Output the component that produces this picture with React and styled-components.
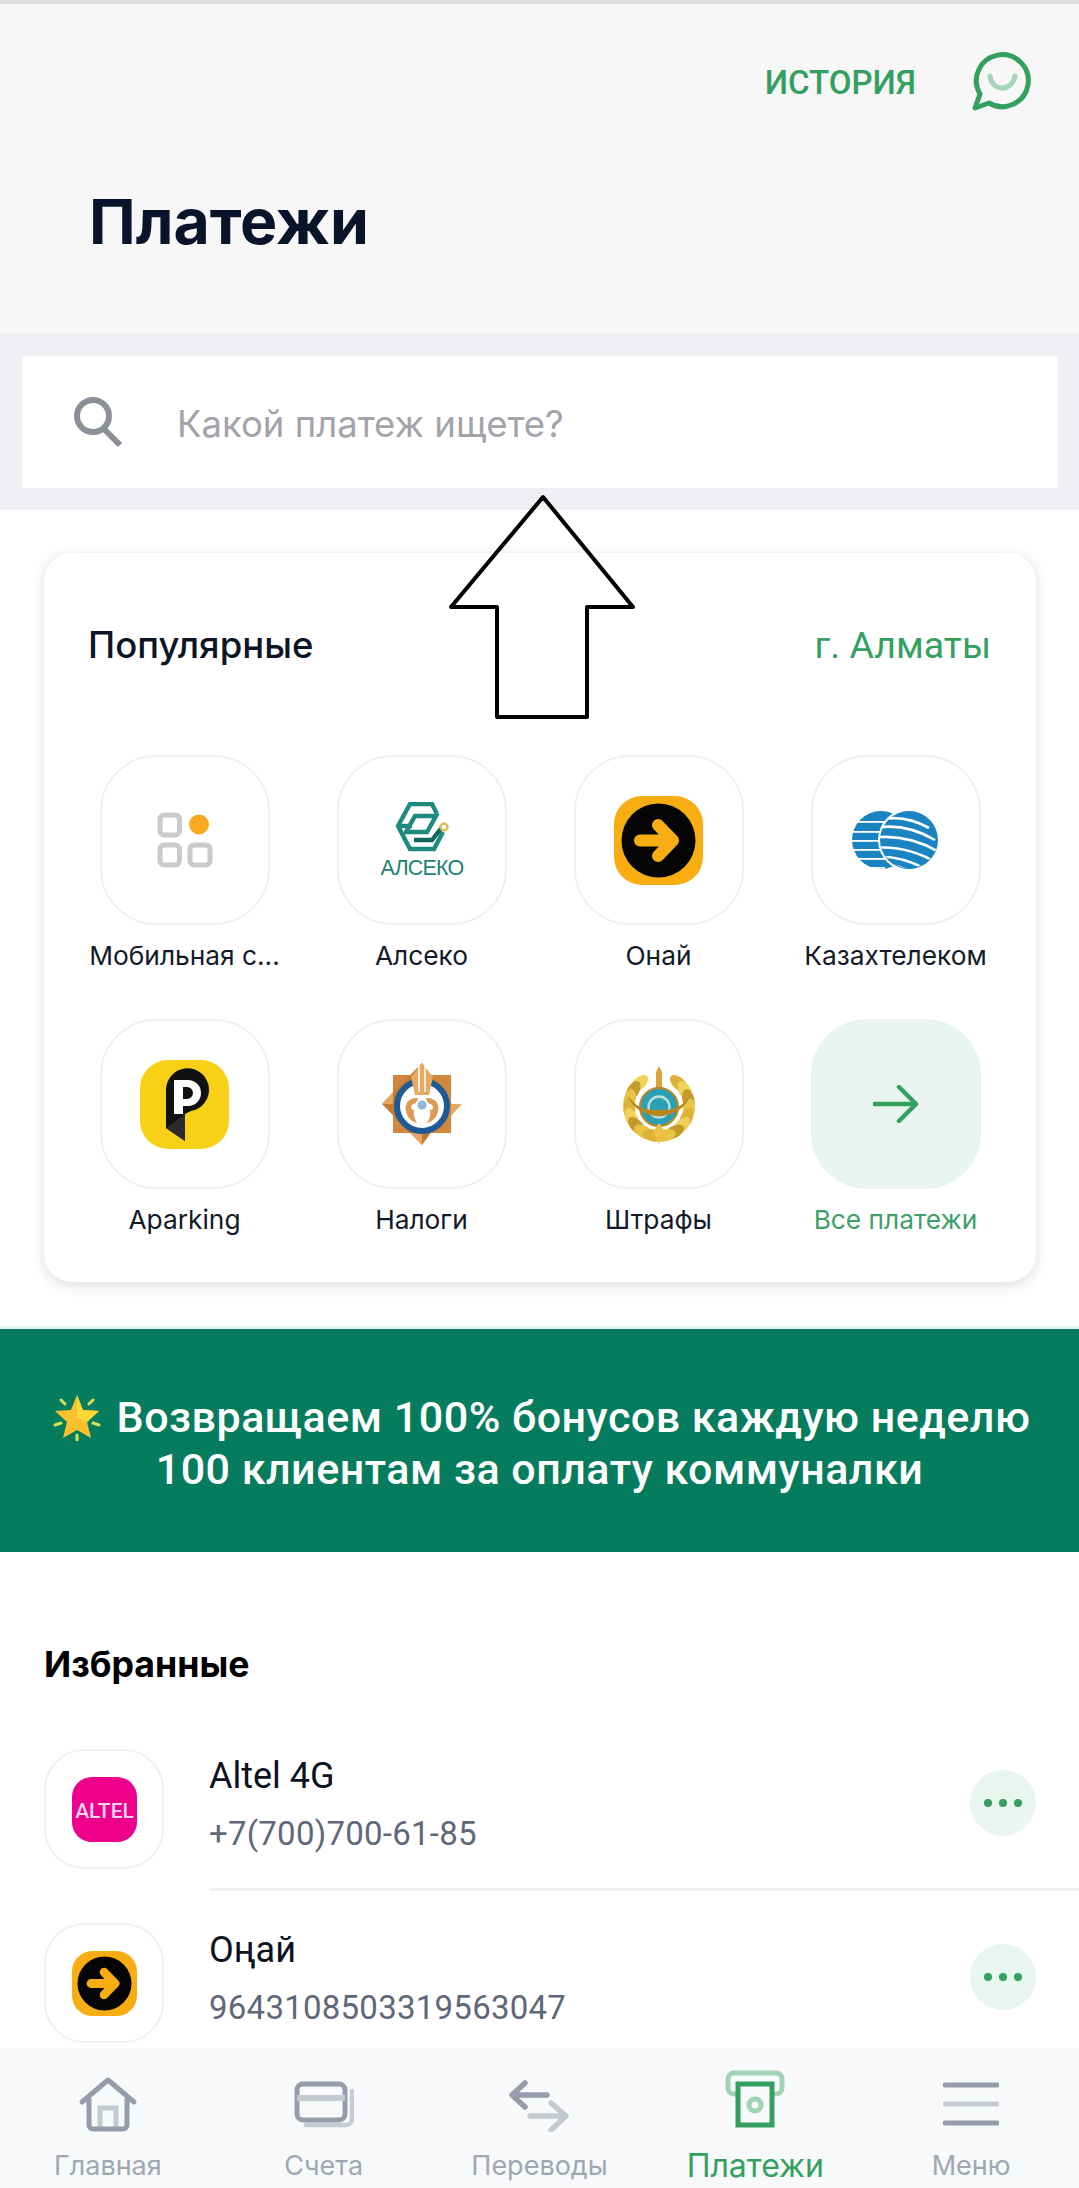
import React from "react";
import styled, { createGlobalStyle } from "styled-components";

const GREEN = "#34a060";
const FONT = `Inter, "Noto Sans", sans-serif`;

const Global = createGlobalStyle`
  html, body { margin: 0; padding: 0; background: #fff; }
  body { font-family: ${FONT}; }
  * { box-sizing: border-box; }
`;

const Page = styled.div`
  position: relative;
  width: 1079px;
  height: 2188px;
  display: flex;
  flex-direction: column;
  overflow: hidden;
  background: #fff;
  border-top: 4px solid #e0e0e0;
`;

const Content = styled.main`
  flex: 1;
  min-height: 0;
  overflow: hidden;
`;

const Header = styled.header`
  height: 329px;
  background: #f7f7f8;
  padding: 44px 45px 0 89px;
`;

const TopActions = styled.div`
  display: flex;
  justify-content: flex-end;
  align-items: center;
  gap: 54px;
  height: 64px;
  margin-bottom: 71px;
`;

const HistoryLink = styled.a`
  padding-top: 4px;
  font-family: "Roboto", sans-serif;
  font-size: 33px;
  font-weight: 500;
  color: ${GREEN};
`;

const Title = styled.h1`
  margin: 0;
  font-size: 62.5px;
  line-height: 76px;
  font-weight: 700;
  color: #07142a;
`;

const SearchBand = styled.div`
  background: #efeff4;
  padding: 23px 21px 22px 22px;
`;

const SearchBox = styled.div`
  height: 132px;
  background: #fff;
  display: flex;
  align-items: center;
  padding-left: 52px;
  gap: 53px;
`;

const Placeholder = styled.span`
  padding-top: 4px;
  font-size: 36.5px;
  color: #a2a4a9;
`;

const Card = styled.section`
  margin: 43px 43px 0 44px;
  height: 729px;
  background: #fff;
  border-radius: 28px;
  box-shadow: 0 3px 14px rgba(20, 30, 50, 0.16);
  padding: 64px 45px 0 44px;
`;

const CardHead = styled.div`
  display: flex;
  justify-content: space-between;
  align-items: center;
  height: 56px;
`;

const CardTitle = styled.h2`
  margin: 0;
  font-size: 36.5px;
  line-height: 56px;
  font-weight: 500;
  color: #0c1526;
`;

const CityLink = styled.a`
  font-family: "Roboto", sans-serif;
  font-size: 37.5px;
  color: ${GREEN};
`;

const Grid = styled.div`
  display: grid;
  grid-template-columns: repeat(4, 237px);
  grid-auto-rows: 264px;
  margin: 82px 0 0 -22px;
`;

const Service = styled.div`
  display: flex;
  flex-direction: column;
  align-items: center;
`;

const Tile = styled.div`
  width: ${(p) => p.$size}px;
  height: ${(p) => p.$size}px;
  flex: none;
  display: flex;
  align-items: center;
  justify-content: center;
  border-radius: ${(p) => Math.round(p.$size * 0.33)}px;
  border: ${(p) => (p.$accent ? "none" : "2.5px solid #f0f0f2")};
  background: ${(p) => (p.$accent ? "#e8f5ee" : "#fff")};
`;

const ServiceName = styled.div`
  width: 237px;
  margin-top: 13px;
  text-align: center;
  font-size: 26.3px;
  line-height: 36px;
  white-space: nowrap;
  color: ${(p) => (p.$accent ? "#3f9f68" : "#121a2a")};
`;

const Banner = styled.div`
  margin-top: 44px;
  border-top: 3px solid #e0f4f0;
`;

const BannerBody = styled.div`
  height: 223px;
  padding-top: 5px;
  background: #067c5e;
  color: #fff;
  display: flex;
  flex-direction: column;
  align-items: center;
  justify-content: center;
  font-family: "Roboto", sans-serif;
  font-size: 43px;
  font-weight: 500;
  line-height: 52px;
  letter-spacing: 0.5px;
`;

const BannerLine = styled.div`
  display: flex;
  align-items: center;
  gap: 16px;
  padding-left: ${(p) => p.$indent || 0}px;
  white-space: nowrap;
`;

const Favorites = styled.section`
  padding: 90px 0 0 44px;
`;

const FavTitle = styled.h2`
  margin: 0 0 63px;
  font-size: 35.7px;
  line-height: 44px;
  font-weight: 700;
  color: #000;
`;

const FavRow = styled.div`
  display: flex;
  align-items: flex-start;
  padding-right: 43px;
`;

const FavInfo = styled.div`
  flex: 1;
  margin-left: 45px;
  padding-top: 6px;
`;

const FavName = styled.div`
  font-family: "Roboto", sans-serif;
  font-size: 36px;
  line-height: 42px;
  color: #0b1220;
`;

const FavNumber = styled.div`
  margin-top: 17px;
  font-family: "Roboto", sans-serif;
  font-size: 33px;
  line-height: 40px;
  letter-spacing: 0.25px;
  color: #5e6879;
`;

const MoreButton = styled.button`
  width: 66px;
  height: 66px;
  margin-top: 21px;
  padding: 0;
  border: 0;
  border-radius: 50%;
  background: #e9f5ef;
  display: flex;
  align-items: center;
  justify-content: center;
  gap: 7px;
`;

const Dot = styled.i`
  width: 8px;
  height: 8px;
  border-radius: 50%;
  background: ${GREEN};
`;

const Divider = styled.hr`
  margin: 19px 0 32px 165px;
  height: 3px;
  border: 0;
  background: #f0f0f1;
`;

const Nav = styled.nav`
  height: 140px;
  flex: none;
  background: #f8f9fa;
  display: grid;
  grid-template-columns: repeat(5, 1fr);
`;

const NavItem = styled.div`
  display: flex;
  flex-direction: column;
  align-items: center;
  justify-content: flex-end;
  padding-bottom: 3px;
`;

const NavIcon = styled.svg`
  display: block;
  margin-bottom: ${(p) => 15 + p.$lift}px;
`;

const NavLabel = styled.span`
  font-size: ${(p) => (p.$active ? 32 : 27)}px;
  line-height: 38px;
  color: ${(p) => (p.$active ? GREEN : "#a0a6b3")};
`;

const Overlay = styled.svg`
  position: absolute;
  left: 440px;
  top: 482px;
  pointer-events: none;
`;

function GridLogo() {
  return (
    <svg width="60" height="60" viewBox="0 0 60 60">
      <g fill="none" stroke="#c9cace" strokeWidth="5">
        <rect x="5" y="5" width="19.5" height="20" rx="4" />
        <rect x="5" y="35" width="19.5" height="20" rx="4" />
        <rect x="35" y="35" width="20" height="20" rx="4" />
      </g>
      <circle cx="44" cy="14.5" r="10" fill="#f9a91e" />
    </svg>
  );
}

function AlsekoLogo() {
  return (
    <svg width="90" height="76" viewBox="0 0 90 76">
      <g fill="none" stroke="#1c8a7c" strokeWidth="4.4">
        <path d="M60 12 55 2H33L21 24l12 23h24l9-17" />
        <path d="M38 14h21l-9 16H29Z" />
        <path d="M21 24h14" />
        <path d="M66 24 55 38H37" stroke="#11665d" />
      </g>
      <circle cx="67" cy="25" r="3.5" fill="#fff" stroke="#e4bd51" strokeWidth="2.4" />
      <text x="45" y="73" textAnchor="middle" fontFamily="Liberation Sans, sans-serif" fontSize="21.5" letterSpacing="-0.8" fill="#1c8274">
        АЛСЕКО
      </text>
    </svg>
  );
}

function OnaiLogo({ size = 89 }) {
  return (
    <svg width={size} height={size} viewBox="0 0 89 89">
      <rect width="89" height="89" rx="28" fill="#f8ae12" />
      <circle cx="44.5" cy="44.5" r="37" fill="#050505" />
      <path d="M26 44.5h32M44 29l15 15.5L44 60" fill="none" stroke="#f8ae12" strokeWidth="12" strokeLinecap="round" strokeLinejoin="round" />
    </svg>
  );
}

function TelecomLogo() {
  const left = [12, 22, 31, 40, 49, 58];
  const right = [
    "M20 14Q50 4 78 20",
    "M14 22Q50 12 84 32",
    "M10 32Q50 22 88 44",
    "M10 42Q50 33 88 56",
    "M14 50Q50 44 82 66",
    "M22 56Q50 54 72 72"
  ];
  return (
    <svg width="90" height="62" viewBox="0 0 90 62">
      <circle cx="30" cy="31" r="29" fill="#1a83c2" />
      {left.map((y) => (
        <rect key={y} x="0" y={y} width="34" height="1.8" fill="#fff" />
      ))}
      <circle cx="58" cy="31" r="31" fill="#fff" />
      <clipPath id="telecomRight">
        <circle cx="58" cy="31" r="29" />
      </clipPath>
      <circle cx="58" cy="31" r="29" fill="#1a83c2" />
      <g fill="none" stroke="#fff" strokeWidth="2.6" transform="translate(0 -1)" clipPath="url(#telecomRight)">
        {right.map((d) => (
          <path key={d} d={d} />
        ))}
      </g>
    </svg>
  );
}

function ParkingLogo() {
  return (
    <svg width="89" height="89" viewBox="0 0 89 89">
      <rect width="89" height="89" rx="28" fill="#f8d117" />
      <path d="M26 30a21.5 21.5 0 1 1 25 21l-6 3v27L26 68Z" fill="#111" />
      <path d="M26 68l19-14v27Z" fill="#2b2b2b" />
      <path fillRule="evenodd" d="M34 20h14a13 13 0 0 1 0 26h-5v8h-9Zm9 7v12h4a6 6 0 0 0 0-12Z" fill="#fff" />
    </svg>
  );
}

function TaxLogo() {
  return (
    <svg width="82" height="84" viewBox="0 0 82 84">
      <path d="M12 13h58v58H12Z" fill="#d3873c" />
      <path d="M41 1 71 42 41 83 1 42Z" fill="#c47a35" />
      <path d="M1 42 12 30v12ZM41 83 30 71h11ZM70 42 81 42 70 54Z" fill="#e6a763" />
      <circle cx="41" cy="44" r="25" fill="#fff" stroke="#1d5a96" strokeWidth="6" />
      <path d="M30 15 41 1l11 14-4 18H34Z" fill="#e7a862" />
      <path d="M38 2v28M44 2v28" stroke="#fff" strokeWidth="1.5" />
      <path d="M37 36c-9-1-14 6-12 13 1 6 5 10 11 12-3-5-4-9-3-13-3 0-4-3-2-5 2-2 5-1 6-7ZM45 36c9-1 14 6 12 13-1 6-5 10-11 12 3-5 4-9 3-13 3 0 4-3 2-5-2-2-5-1-6-7Z" fill="#dd9a52" />
      <circle cx="41" cy="43" r="4.5" fill="#8fb9dc" />
    </svg>
  );
}

function FineLogo() {
  const angles = [42, 60, 78, 96, 114, 132, 150, 168];
  const tones = ["#dcb336", "#f0d25a", "#c49a2a", "#e8c445"];
  return (
    <svg width="78" height="82" viewBox="0 0 78 82">
      {angles.map((a, i) => (
        <g key={a}>
          <ellipse cx="39" cy="13" rx="11" ry="6" transform={`rotate(${a} 39 43)`} fill={tones[i % 4]} />
          <ellipse cx="39" cy="13" rx="11" ry="6" transform={`rotate(${-a} 39 43)`} fill={tones[(i + 1) % 4]} />
        </g>
      ))}
      <path d="M39 3l3 6v22h-6V9Z" fill="#dca53a" />
      <circle cx="39" cy="44" r="19" fill="#2c9fb5" stroke="#b98a26" strokeWidth="2" />
      <circle cx="39" cy="44" r="10.5" fill="none" stroke="#bfe0d8" strokeWidth="2.4" />
      <path d="M8 32c9 15 21 15 31 15s22 0 31-15c-3 13-18 21-31 21S11 45 8 32Z" fill="#b8861e" />
      <path d="M39 60l6 9-6 12-6-12Z" fill="#eec045" />
    </svg>
  );
}

function AltelLogo() {
  return (
    <svg width="65" height="65" viewBox="0 0 65 65">
      <rect width="65" height="65" rx="20" fill="#ec008c" />
      <text x="32.5" y="41" textAnchor="middle" fontFamily="Roboto, sans-serif" fontSize="21" fontWeight="500" fill="#fbd6ec">
        ALTEL
      </text>
    </svg>
  );
}

function AllArrow() {
  return (
    <svg width="48" height="38" viewBox="0 0 48 38">
      <path d="M3 19h41M27 2l17 17-17 17" fill="none" stroke={GREEN} strokeWidth="4.5" strokeLinecap="round" strokeLinejoin="round" />
    </svg>
  );
}

function Star() {
  return (
    <svg width="48" height="48" viewBox="0 0 48 48">
      <path d="M24 2l6 15 16 1-12 11 4 16-14-8-14 8 4-16L2 18l16-1Z" fill="#fbc02d" />
      <path d="M24 2l6 15 16 1-12 11-10-5Z" fill="#fdd835" />
      <g stroke="#d4e157" strokeWidth="3" strokeLinecap="round">
        <path d="M8 7l4 4M40 7l-4 4M2 32l6-2M46 32l-6-2M24 42v5" />
      </g>
    </svg>
  );
}

function WhatsApp() {
  return (
    <svg width="64" height="64" viewBox="0 0 64 64">
      <path d="M10 46A26 26 0 1 1 19 55L5 60Z" fill="none" stroke={GREEN} strokeWidth="5" strokeLinejoin="round" />
      <path d="M20 28c2 16 22 16 25 0" fill="none" stroke="#a5d4b6" strokeWidth="5" strokeLinecap="round" />
    </svg>
  );
}

function SearchIcon() {
  return (
    <svg width="50" height="50" viewBox="0 0 50 50">
      <circle cx="19" cy="19" r="16" fill="none" stroke="#8b8f98" strokeWidth="6" />
      <path d="M30 32l16 16" stroke="#8b8f98" strokeWidth="6" />
    </svg>
  );
}

const services = [
  { name: "Мобильная с...", logo: <GridLogo /> },
  { name: "Алсеко", logo: <AlsekoLogo /> },
  { name: "Онай", logo: <OnaiLogo /> },
  { name: "Казахтелеком", logo: <TelecomLogo /> },
  { name: "Aparking", logo: <ParkingLogo /> },
  { name: "Налоги", logo: <TaxLogo /> },
  { name: "Штрафы", logo: <FineLogo /> },
  { name: "Все платежи", logo: <AllArrow />, accent: true }
];

const favorites = [
  { name: "Altel 4G", number: "+7(700)700-61-85", logo: <AltelLogo /> },
  { name: "Оңай", number: "9643108503319563047", logo: <OnaiLogo size={65} /> }
];

const navItems = [
  {
    label: "Главная",
    w: 60,
    h: 56,
    lift: 0,
    icon: (
      <>
        <path d="M22 52V32h16v20" fill="none" stroke="#c5c9d1" strokeWidth="5" />
        <path d="M4 26 30 4l26 22M11 24v25a4 4 0 0 0 4 4h30a4 4 0 0 0 4-4V24" fill="none" stroke="#959cab" strokeWidth="5" strokeLinecap="round" strokeLinejoin="round" />
      </>
    )
  },
  {
    label: "Счета",
    w: 60,
    h: 48,
    lift: 3,
    icon: (
      <>
        <path d="M56 8v28a6 6 0 0 1-6 6H10" transform="translate(2 2)" fill="none" stroke="#c5c9d1" strokeWidth="4.5" strokeLinecap="round" />
        <rect x="3" y="3" width="48" height="36" rx="6" fill="none" stroke="#959cab" strokeWidth="5" />
        <path d="M3 17h48" stroke="#c5c9d1" strokeWidth="6" />
      </>
    )
  },
  {
    label: "Переводы",
    w: 62,
    h: 52,
    lift: 0,
    icon: (
      <>
        <path d="M17 3 4 15l13 12M5 15h34" fill="none" stroke="#959cab" strokeWidth="5.5" strokeLinecap="round" strokeLinejoin="round" />
        <path d="M43 23l15 13-15 14M22 36h35" fill="none" stroke="#c5c9d1" strokeWidth="5.5" strokeLinecap="round" strokeLinejoin="round" />
      </>
    )
  },
  {
    label: "Платежи",
    active: true,
    w: 60,
    h: 58,
    lift: 4,
    icon: (
      <>
        <path d="M12 24H9a6 6 0 0 1-6-6V9a6 6 0 0 1 6-6h42a6 6 0 0 1 6 6v9a6 6 0 0 1-6 6h-3" fill="none" stroke="#a0d3b3" strokeWidth="5" />
        <rect x="13" y="14" width="34" height="41" fill="#f8f9fa" stroke={GREEN} strokeWidth="5" />
        <circle cx="30" cy="35" r="6" fill="none" stroke="#a0d3b3" strokeWidth="5" />
      </>
    )
  },
  {
    label: "Меню",
    w: 56,
    h: 46,
    lift: 5,
    icon: (
      <>
        <path d="M2 4h52M2 42h52" stroke="#959cab" strokeWidth="5" strokeLinecap="round" />
        <path d="M2 23h52" stroke="#c5c9d1" strokeWidth="5" strokeLinecap="round" />
      </>
    )
  }
];

export default function App() {
  return (
    <Page>
      <Global />
      <Content>
        <Header>
          <TopActions>
            <HistoryLink>ИСТОРИЯ</HistoryLink>
            <WhatsApp />
          </TopActions>
          <Title>Платежи</Title>
        </Header>
        <SearchBand>
          <SearchBox>
            <SearchIcon />
            <Placeholder>Какой платеж ищете?</Placeholder>
          </SearchBox>
        </SearchBand>
        <Card>
          <CardHead>
            <CardTitle>Популярные</CardTitle>
            <CityLink>г. Алматы</CityLink>
          </CardHead>
          <Grid>
            {services.map((s) => (
              <Service key={s.name}>
                <Tile $size={170} $accent={s.accent}>
                  {s.logo}
                </Tile>
                <ServiceName $accent={s.accent}>{s.name}</ServiceName>
              </Service>
            ))}
          </Grid>
        </Card>
        <Banner>
          <BannerBody>
            <BannerLine $indent={4}>
              <Star />
              Возвращаем 100% бонусов каждую неделю
            </BannerLine>
            <BannerLine>100 клиентам за оплату коммуналки</BannerLine>
          </BannerBody>
        </Banner>
        <Favorites>
          <FavTitle>Избранные</FavTitle>
          {favorites.map((f, i) => (
            <React.Fragment key={f.name}>
              {i > 0 && <Divider />}
              <FavRow>
                <Tile $size={120}>{f.logo}</Tile>
                <FavInfo>
                  <FavName>{f.name}</FavName>
                  <FavNumber>{f.number}</FavNumber>
                </FavInfo>
                <MoreButton>
                  <Dot />
                  <Dot />
                  <Dot />
                </MoreButton>
              </FavRow>
            </React.Fragment>
          ))}
        </Favorites>
      </Content>
      <Nav>
        {navItems.map((n) => (
          <NavItem key={n.label}>
            <NavIcon width={n.w} height={n.h} viewBox={`0 0 ${n.w} ${n.h}`} $lift={n.lift}>
              {n.icon}
            </NavIcon>
            <NavLabel $active={n.active}>{n.label}</NavLabel>
          </NavItem>
        ))}
      </Nav>
      <Overlay width="200" height="240" viewBox="0 0 200 240">
        <path d="M103 11 193 121H147V231H57V121H11Z" fill="none" stroke="#000" strokeWidth="4" strokeLinejoin="round" />
      </Overlay>
    </Page>
  );
}
